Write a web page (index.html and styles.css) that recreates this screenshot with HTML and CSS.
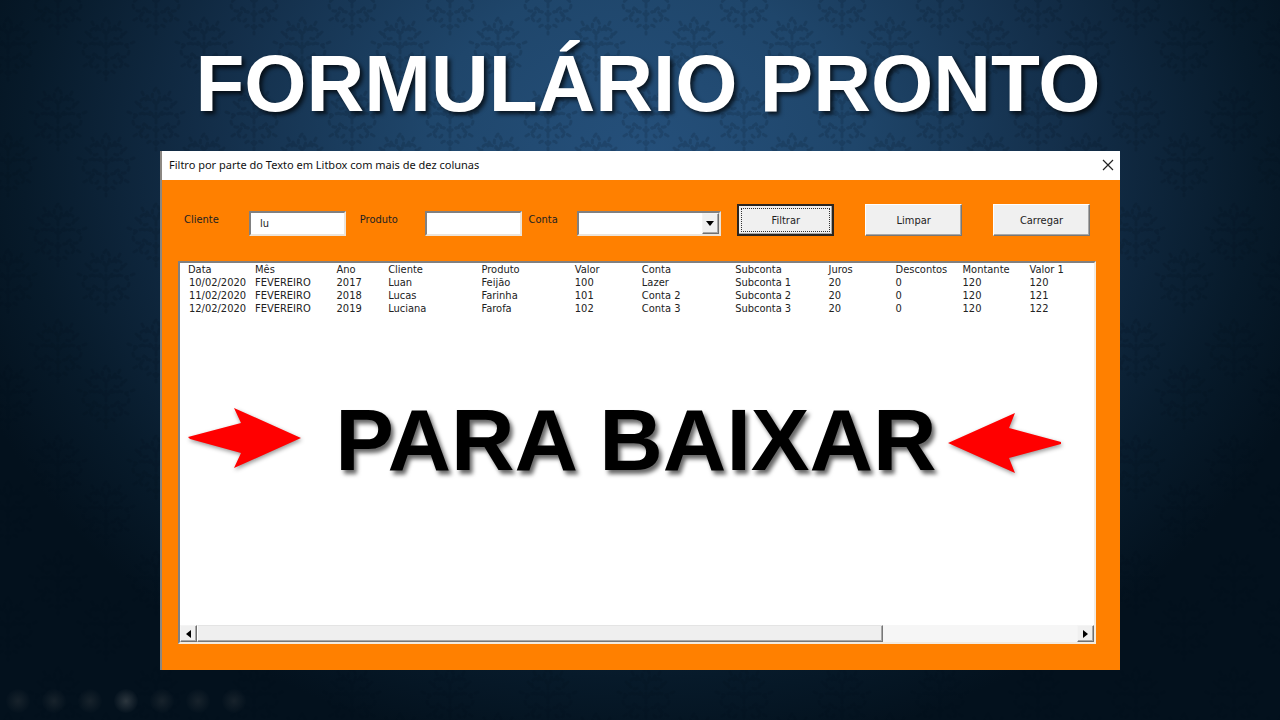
FILE: index.html
```html
<!DOCTYPE html>
<html lang="pt-BR">
<head>
    <meta charset="UTF-8">
    <meta name="viewport" content="width=device-width, initial-scale=1.0">
    <title>Formulário pronto</title>
    <link rel="stylesheet" href="styles.css">
</head>
<body>
  <svg class="damask" aria-hidden="true">
    <defs>
      <g id="motif" fill="none" stroke="#020d1a" stroke-width="3" stroke-linecap="round" stroke-dasharray="3 4">
        <path d="M0 -30c-5 6 -5 10 0 15c5 -5 5 -9 0 -15zM0 -14c-9 -9 -17 -6 -16 1c1 5 8 5 9 1M0 -14c9 -9 17 -6 16 1c-1 5 -8 5 -9 1"/>
        <path d="M0 0c-10 -8 -22 -5 -23 3c0 7 9 8 11 3M0 0c10 -8 22 -5 23 3c0 7 -9 8 -11 3M0 -12v44"/>
        <path d="M0 14c-6 -7 -15 -5 -16 1c0 5 7 6 8 2M0 14c6 -7 15 -5 16 1c0 5 -7 6 -8 2M0 27c-4 -6 -9 -4 -9 0M0 27c4 -6 9 -4 9 0"/>
        <path d="M-20 -16l5 5M20 -16l-5 5M-28 -6l8 3M28 -6l-8 3M-14 -26l4 8M14 -26l-4 8M-22 18l8 -5M22 18l-8 -5M-9 -22l3 6M9 -22l-3 6M-12 6l6 4M12 6l-6 4M-6 -6l3 3M6 -6l-3 3M-11 -4l-6 -2M11 -4l6 -2"/>
      </g>
      <pattern id="wallpaper" width="98" height="116" patternUnits="userSpaceOnUse" x="8">
        <use href="#motif" x="50" y="2"/>
        <use href="#motif" x="50" y="118"/>
        <use href="#motif" x="0" y="48"/>
        <use href="#motif" x="98" y="48"/>
      </pattern>
    </defs>
    <rect width="100%" height="100%" fill="url(#wallpaper)"/>
  </svg>

  <main class="slide">
    <h1 class="headline">FORMULÁRIO PRONTO</h1>

    <section class="dialog">
      <header class="title-bar">
        <span>Filtro por parte do Texto em Litbox com mais de dez colunas</span>
        <button class="close" aria-label="Fechar">
          <svg width="12" height="12" viewBox="0 0 12 12"><path d="M1 1l10 10M11 1L1 11" stroke="#222" stroke-width="1.2"/></svg>
        </button>
      </header>

      <form class="form-body" onsubmit="return false">
        <div class="filters">
          <label for="cliente">Cliente</label>
          <input type="text" id="cliente" value="lu">
          <label for="produto">Produto</label>
          <input type="text" id="produto">
          <label for="conta">Conta</label>
          <div class="combo">
            <select id="conta"><option></option><option>Lazer</option><option>Conta 2</option><option>Conta 3</option></select>
            <span class="combo-arrow"><svg width="8" height="5"><path d="M0 0h8L4 5z"/></svg></span>
          </div>
          <button class="btn default"><span>Filtrar</span></button>
          <button class="btn">Limpar</button>
          <button class="btn">Carregar</button>
        </div>

        <div class="listbox">
          <table class="rows">
            <thead>
              <tr><th>Data</th><th>Mês</th><th>Ano</th><th>Cliente</th><th>Produto</th><th>Valor</th><th>Conta</th><th>Subconta</th><th>Juros</th><th>Descontos</th><th>Montante</th><th>Valor 1</th></tr>
            </thead>
            <tbody>
              <tr><td>10/02/2020</td><td>FEVEREIRO</td><td>2017</td><td>Luan</td><td>Feijão</td><td>100</td><td>Lazer</td><td>Subconta 1</td><td>20</td><td>0</td><td>120</td><td>120</td></tr>
              <tr><td>11/02/2020</td><td>FEVEREIRO</td><td>2018</td><td>Lucas</td><td>Farinha</td><td>101</td><td>Conta 2</td><td>Subconta 2</td><td>20</td><td>0</td><td>120</td><td>121</td></tr>
              <tr><td>12/02/2020</td><td>FEVEREIRO</td><td>2019</td><td>Luciana</td><td>Farofa</td><td>102</td><td>Conta 3</td><td>Subconta 3</td><td>20</td><td>0</td><td>120</td><td>122</td></tr>
            </tbody>
          </table>

          <div class="banner">
            <svg class="arrow" width="114" height="60" viewBox="0 0 114 60"><path d="M0 29L53 15L46 0L113 30L46 60L53 45L2 31z"/></svg>
            <h2>PARA BAIXAR</h2>
            <svg class="arrow" width="114" height="60" viewBox="0 0 114 60"><path d="M113 29L61 15L67 0L0 30L67 60L61 45L113 31z"/></svg>
          </div>

          <div class="scrollbar">
            <button class="scroll-btn" aria-label="Rolar para a esquerda"><svg width="5" height="8"><path d="M5 0v8L0 4z"/></svg></button>
            <div class="track"><div class="thumb"></div></div>
            <button class="scroll-btn" aria-label="Rolar para a direita"><svg width="5" height="8"><path d="M0 0v8l5-4z"/></svg></button>
          </div>
        </div>
      </form>
    </section>

    <div class="controls">
      <i></i><i></i><i></i><i class="bright"></i><i></i><i></i><i></i>
    </div>
  </main>
</body>
</html>
```
FILE: styles.css
```css
* {
  box-sizing: border-box;
}

body {
  margin: 0;
  min-height: 100vh;
  background: radial-gradient(ellipse 56% 84% at 50% 22%, #25507b 0%, #1f466b 30%, #132e49 60%, #071a2a 86%, #03111d 100%);
  font-family: "DejaVu Sans Condensed", "DejaVu Sans", sans-serif;
  font-size: 11px;
  line-height: 13px;
  color: #222;
}

/* wallpaper behind the slide */
.damask {
  position: absolute;
  inset: 0;
  width: 100%;
  height: 100%;
  opacity: 0.14;
}

.slide {
  position: relative;
  padding-top: 36px;
}

.headline {
  margin: 0 0 19px;
  padding-left: 16px;
  font: bold 80px/96px "Liberation Sans", Arial, sans-serif;
  text-align: center;
  color: #fff;
  text-shadow: 3px 3px 4px rgba(0, 0, 0, 0.7);
}

.dialog {
  width: 75%;
  margin: 0 auto;
  border-left: 2px solid #8b8782;
  background: #ff8000;
}

.title-bar {
  display: flex;
  justify-content: space-between;
  align-items: center;
  height: 29px;
  padding: 0 6px 2px 7px;
  background: #fff;
  font-family: "Noto Sans", "Open Sans", sans-serif;
  font-size: 11px;
  color: #111;
}

.close {
  display: flex;
  padding: 0;
  border: none;
  background: none;
}

.form-body {
  padding: 24px 24px 26px 16px;
}

.filters {
  display: grid;
  grid-template-columns: 65fr 111fr 65fr 104fr 48fr 161fr 128fr 128fr 97fr;
  margin: 0 6px 25px;
  height: 32px;
}

.filters label {
  padding-top: 9px;
}

.filters input,
.combo {
  height: 25px;
  margin-top: 7px;
  border: 2px solid;
  border-color: #808080 #ece4da #ece4da #808080;
  background: #fff;
}

.filters input {
  width: 97px;
  padding: 0 9px;
  font: inherit;
  color: inherit;
}

.combo {
  display: flex;
  width: 144px;
}

.combo select {
  flex: 1;
  min-width: 0;
  appearance: none;
  border: none;
  background: none;
  font: inherit;
}

.combo-arrow,
.scroll-btn {
  display: flex;
  justify-content: center;
  align-items: center;
  width: 17px;
  padding: 0;
  border: 1px solid;
  border-color: #f4f4f4 #707070 #707070 #f4f4f4;
  background: #f0f0f0;
  box-shadow: inset -1px -1px #a8a8a8;
}

.combo-arrow {
  pointer-events: none;
}

.btn {
  width: 97px;
  height: 32px;
  padding: 0;
  border: 1px solid;
  border-color: #fff #777 #777 #fff;
  background: #f0f0f0;
  box-shadow: inset -1px -1px #a8a8a8;
  font: inherit;
  color: inherit;
}

.default {
  padding: 2px;
  border: 2px solid #2b2520;
}

.default span {
  display: flex;
  justify-content: center;
  align-items: center;
  height: 100%;
  border: 1px dotted #333;
}

.listbox {
  border: 2px solid;
  border-color: #808080 #f3ebe0 #f3ebe0 #808080;
  background: #fff;
}

.rows {
  width: 100%;
  padding-left: 8px;
  table-layout: fixed;
  border-collapse: separate;
  border-spacing: 0;
}

.rows th,
.rows td {
  padding: 0;
  font-weight: normal;
  text-align: left;
  white-space: nowrap;
}

.rows td:first-child {
  padding-left: 1px;
}

.rows th:nth-child(1),
.rows th:nth-child(6),
.rows th:nth-child(9),
.rows th:nth-child(10),
.rows th:nth-child(11) {
  width: 7.4%;
}

.rows th:nth-child(2) {
  width: 9%;
}

.rows th:nth-child(3) {
  width: 5.7%;
}

.rows th:nth-child(4),
.rows th:nth-child(5),
.rows th:nth-child(7),
.rows th:nth-child(8) {
  width: 10.3%;
}

.banner {
  display: flex;
  justify-content: space-between;
  align-items: center;
  padding: 75px 32px 135px 8px;
}

.banner h2 {
  margin: 0;
  padding-left: 22px;
  font: bold 88px/100px "Liberation Sans", Arial, sans-serif;
  color: #000;
  white-space: nowrap;
  text-shadow: 3px 4px 4px rgba(0, 0, 0, 0.6);
}

.arrow {
  overflow: visible;
  fill: #f00;
  filter: drop-shadow(1px 2px 2px rgba(0, 0, 0, 0.4));
}

.arrow:first-child {
  margin-bottom: 4px;
}

.arrow:last-child {
  margin-top: 6px;
}

.scrollbar {
  display: flex;
  height: 17px;
  background: #f6f6f6;
}

.track {
  flex: 1;
}

.thumb {
  width: 78%;
  height: 100%;
  border: 1px solid;
  border-color: #e4e4e4 #777 #777 #fff;
  background: #efefef;
  box-shadow: inset -1px -1px #a8a8a8;
}

/* faded slideshow controls */
.controls {
  display: flex;
  gap: 12px;
  padding: 19px 6px 0;
}

.controls i {
  width: 24px;
  height: 24px;
  border-radius: 50%;
  background: radial-gradient(#17222b, rgba(23, 34, 43, 0) 75%);
}

.controls .bright {
  background: radial-gradient(#2c363e, rgba(44, 54, 62, 0) 75%);
}
```
